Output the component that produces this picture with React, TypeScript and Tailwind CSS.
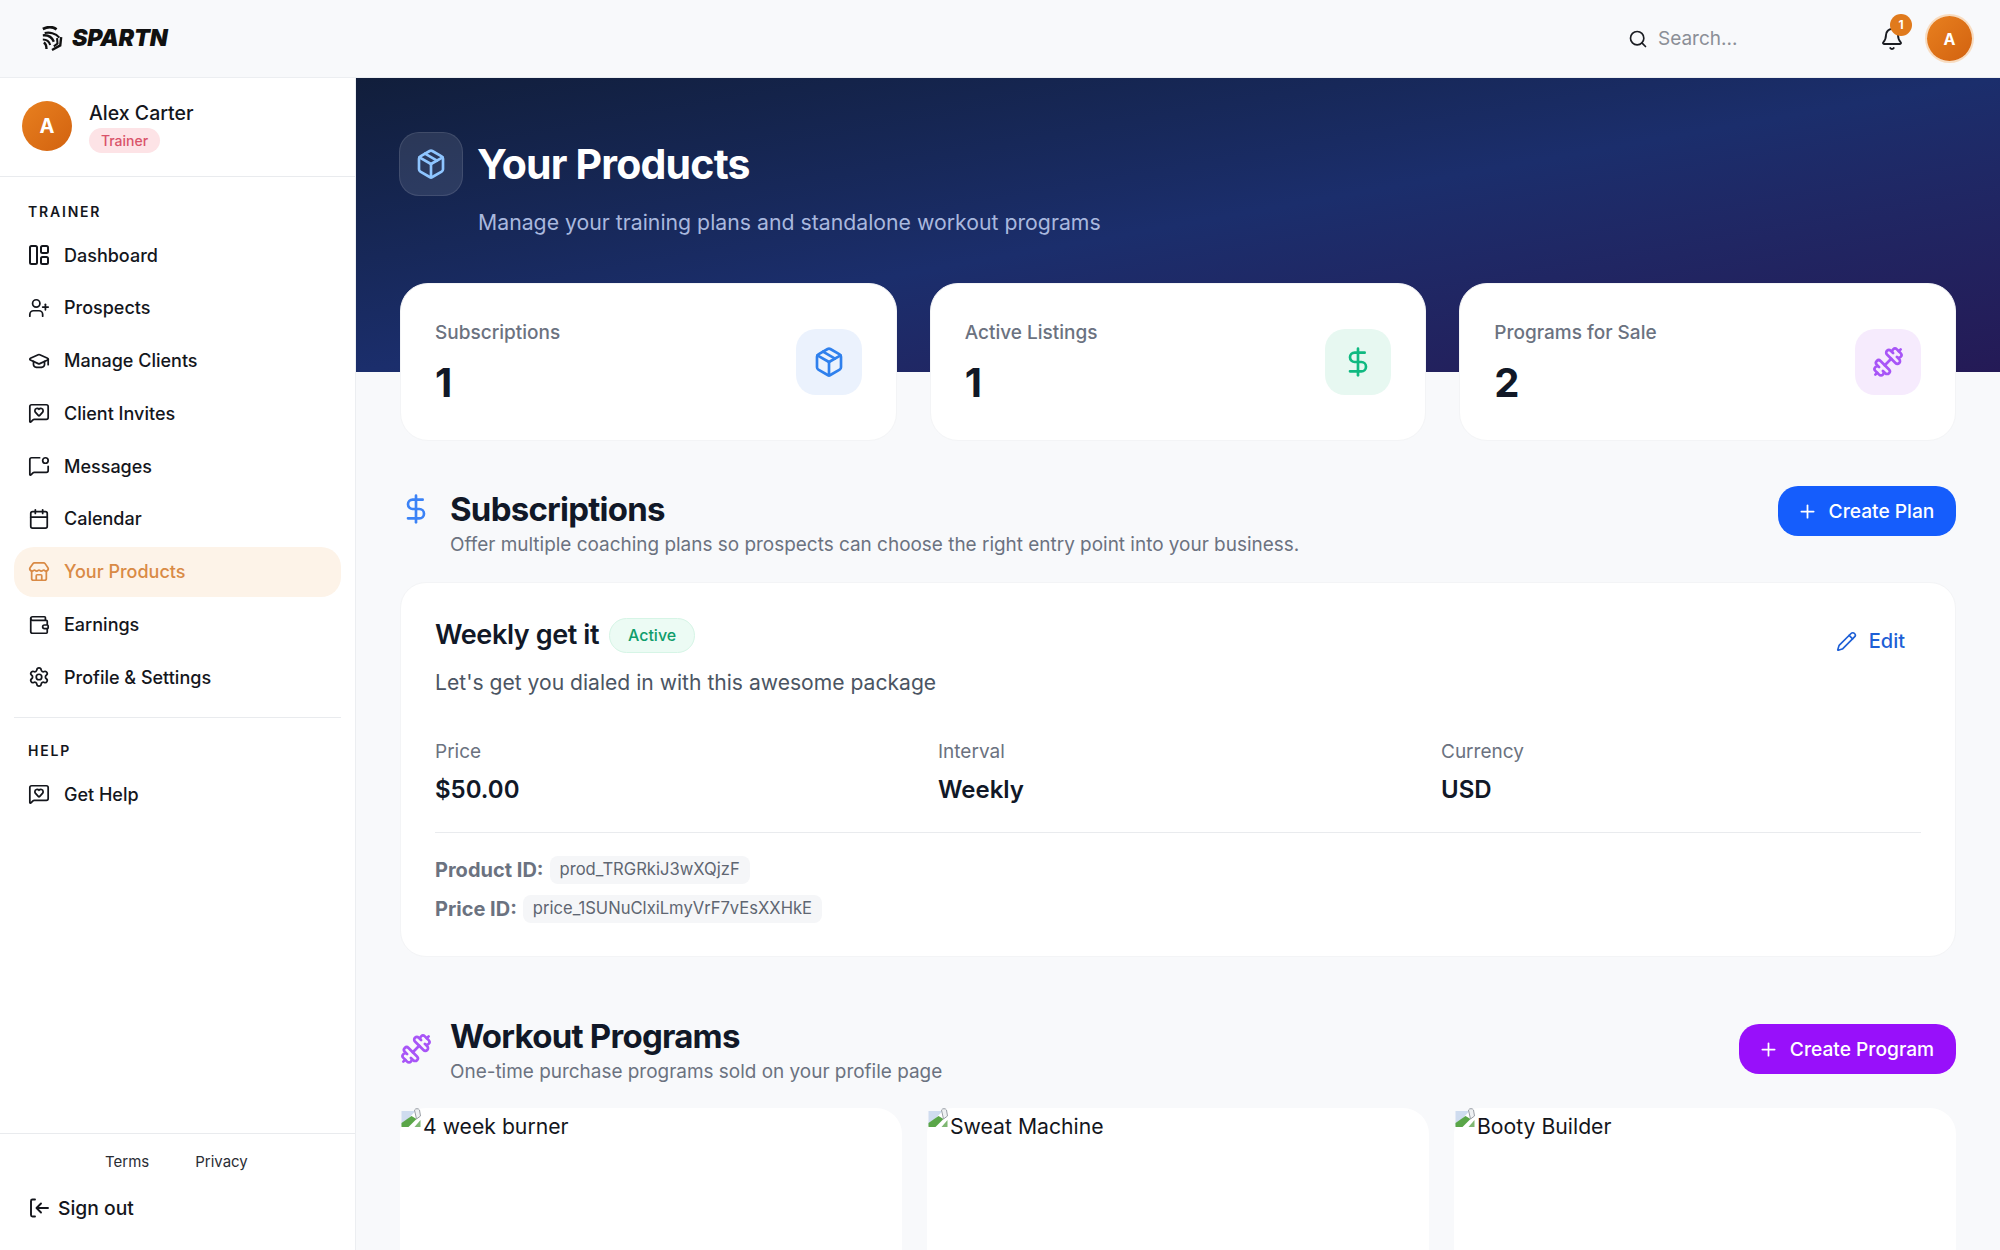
import React from "react";
import {
  Package, DollarSign, Dumbbell, Plus, Search, Bell, Pencil, UserPlus, GraduationCap, MessageSquareHeart,
  MessageSquareDot, Calendar, Store, Wallet, Settings,
} from "lucide-react";

const DashIcon = ({ className = "" }: { className?: string }) => (
  <svg viewBox="0 0 22 22" className={className} fill="none" stroke="currentColor" strokeWidth="2" strokeLinejoin="round">
    <rect x="2" y="2" width="7" height="18" rx="1.5" />
    <rect x="13" y="2" width="7" height="7" rx="1.5" />
    <rect x="13" y="13" width="7" height="7" rx="1.5" />
  </svg>
);

const SignOutIcon = () => (
  <svg viewBox="0 0 22 22" className="w-[22px] h-[22px]" fill="none" stroke="currentColor" strokeWidth="1.9" strokeLinecap="round" strokeLinejoin="round">
    <path d="M7 2.5H4.5a1.5 1.5 0 0 0-1.5 1.5v14a1.5 1.5 0 0 0 1.5 1.5H7" />
    <path d="M20 11H9M13 6.5 8.5 11l4.5 4.5" />
  </svg>
);

const Helmet = () => (
  <svg viewBox="0 0 24 28" className="w-[22px] h-[26px]" fill="none" stroke="#111" strokeWidth="2.2">
    <path d="M2 3c5-2.4 11-2.4 15 .4" strokeWidth="3" />
    <path d="M4 7.500c5-1.200 12 0 16 5" />
    <path d="M2 10c6-.6 10 2 12 7" strokeWidth="2.6" />
    <path d="M2 14.500c4 0 7 2 8 6" />
    <path d="M3 18c2 1 3 3 3 7" strokeWidth="2.6" />
    <path d="M22 12l-1 9-9 5" strokeWidth="2.6" />
    <path d="M17.500 13l.5 6-4 3" />
  </svg>
);

const BrokenImage = () => (
  <svg viewBox="0 0 20 22" className="w-[23px] h-[22px] shrink-0 -mt-[6px]">
    <path d="M0 20 L14 5 L0 5 Z" fill="#cfdcef" />
    <path d="M0 21 L0 17 L10 10 L15 13 L7 21 Z" fill="#5aa648" />
    <path d="M13 21 L19 14 L19 21 Z" fill="#7fb772" />
    <path d="M13 4 a3 3 0 0 1 5 0 L19 10 L15 13 Z" fill="#eef0f2" stroke="#9a9fa6" strokeWidth="1" />
  </svg>
);

const Nav = ({ icon: Icon, label, active = false }: { icon: any; label: string; active?: boolean }) => (
  <div className={`h-[50px] mb-[2.8px] rounded-[20px] flex items-center pl-[14px] gap-[14px] text-[18px] font-medium ${active ? "bg-[#fdf3e8] text-[#d98a45]" : "text-[#14161c]"}`}>
    <Icon className="w-[22px] h-[22px]" strokeWidth={1.9} />
    <span>{label}</span>
  </div>
);

const Stat = ({ label, value, icon: Icon, box, color }: { label: string; value: string; icon: any; box: string; color: string }) => (
  <div className="h-[158px] rounded-[28px] bg-white border border-[#f3f4f6] pl-[34px] pr-[34px] flex items-center justify-between">
    <div className="self-start pt-[36px]">
      <div className="text-[19px] leading-[26px] text-[#6b7280] font-medium">{label}</div>
      <div className="text-[40px] leading-[48px] mt-[13px] font-bold text-[#111827]">{value}</div>
    </div>
    <div className={`w-[66px] h-[66px] rounded-[20px] flex items-center justify-center ${box}`}>
      <Icon className={`w-[32px] h-[32px] ${color}`} strokeWidth={2} />
    </div>
  </div>
);

const SectionHead = ({ icon: Icon, iconColor, iconTop, btnTop, title, sub, button, btnColor, btnW }: { icon: any; iconColor: string; iconTop: string; btnTop: string; title: string; sub: string; button: string; btnColor: string; btnW: string }) => (
  <div className="flex items-start justify-between">
    <div className="flex items-start">
      <div className={`w-[50px] shrink-0 ${iconTop}`}>
        <Icon className={`w-[32px] h-[32px] ${iconColor}`} strokeWidth={2} />
      </div>
      <div>
        <div className="text-[33px] leading-[46px] font-bold tracking-[-0.75px] text-[#111827]">{title}</div>
        <div className="text-[18.95px] leading-[24px] mt-[1px] text-[#6b7280]">{sub}</div>
      </div>
    </div>
    <div className={`h-[50px] rounded-[20px] flex items-center justify-center gap-[11px] pr-[3px] text-white text-[19.2px] font-medium ${btnColor} ${btnW} ${btnTop}`}>
      <Plus className="w-[21px] h-[21px]" strokeWidth={2} />
      {button}
    </div>
  </div>
);

const Field = ({ label, value }: { label: string; value: string }) => (
  <div>
    <div className="text-[19px] leading-[26px] text-[#6b7280]">{label}</div>
    <div className="text-[24px] leading-[34px] mt-[8px] font-semibold text-[#111827]">{value}</div>
  </div>
);

const IdRow = ({ label, value }: { label: string; value: string }) => (
  <div className="flex items-center gap-[6px] h-[29px]">
    <span className="text-[20px] font-bold text-[#6b7280]">{label}</span>
    <span className="bg-[#f5f6f8] rounded-[8px] h-[28px] px-[10px] flex items-center text-[16.6px] text-[#5f6672]">{value}</span>
  </div>
);

const ProgramCard = ({ alt }: { alt: string }) => (
  <div className="h-[300px] rounded-[26px] bg-white flex items-start pt-[4px] text-[21.2px] leading-[28px] text-[#14161c]">
    <BrokenImage />
    <span>{alt}</span>
  </div>
);

export default function App() {
  return (
    <div className="h-screen overflow-hidden flex flex-col bg-[#f8f9fb] font-['Inter',sans-serif]">
      <header className="h-[78px] shrink-0 flex items-center border-b border-[#eceef1] bg-[#f8f9fb]">
        <div className="pl-[41px] flex items-center gap-[9px]">
          <Helmet />
          <span className="text-[23.3px] font-black italic tracking-[-0.2px] text-[#111]">SPARTN</span>
        </div>
        <div className="ml-auto flex items-center">
          <Search className="w-[20px] h-[20px] text-[#1a1c22]" strokeWidth={2} />
          <span className="ml-[10px] pt-[2px] text-[19px] text-[#8b8f97] w-[222px]">Search...</span>
          <div className="relative w-[24px] h-[24px] text-[#1a1c22]">
            <Bell className="w-[24px] h-[24px]" strokeWidth={1.9} />
            <span className="absolute -top-[13px] left-[10px] w-[22px] h-[22px] rounded-full bg-[#e07a1c] text-white text-[12px] font-bold flex items-center justify-center">1</span>
          </div>
          <div className="ml-[23px] mr-[28px] w-[45px] h-[45px] rounded-full bg-gradient-to-br from-[#e8801f] to-[#d2620f] ring-2 ring-[#f8dcc0] text-white text-[16px] font-bold flex items-center justify-center">A</div>
        </div>
      </header>
      <div className="flex-1 flex min-h-0">
        <aside className="w-[356px] shrink-0 bg-white border-r border-[#eceef1] flex flex-col">
          <div className="h-[99px] shrink-0 border-b border-[#e9ebee] flex items-center pl-[22px] gap-[17px] pb-[2px]">
            <div className="w-[50px] h-[50px] rounded-full bg-gradient-to-br from-[#e8801f] to-[#d2620f] text-white text-[20px] font-bold flex items-center justify-center">A</div>
            <div>
              <div className="text-[19.5px] leading-[26px] font-medium text-[#14161c]">Alex Carter</div>
              <div className="mt-[2px] w-[71px] h-[25px] rounded-full bg-[#fde3e6] text-[#d9536a] text-[14px] font-medium flex items-center justify-center">Trainer</div>
            </div>
          </div>
          <div className="px-[14px] pt-[25px]">
            <div className="pl-[14px] text-[14px] leading-[20px] font-semibold tracking-[1.8px] text-[#14161c] mb-[8px]">TRAINER</div>
            <Nav icon={DashIcon} label="Dashboard" />
            <Nav icon={UserPlus} label="Prospects" />
            <Nav icon={GraduationCap} label="Manage Clients" />
            <Nav icon={MessageSquareHeart} label="Client Invites" />
            <Nav icon={MessageSquareDot} label="Messages" />
            <Nav icon={Calendar} label="Calendar" />
            <Nav icon={Store} label="Your Products" active />
            <Nav icon={Wallet} label="Earnings" />
            <Nav icon={Settings} label="Profile & Settings" />
            <div className="h-px bg-[#e9ebee] mt-[15px]" />
            <div className="pl-[14px] text-[14px] leading-[20px] font-semibold tracking-[1.8px] text-[#14161c] mt-[23px] mb-[8px]">HELP</div>
            <Nav icon={MessageSquareHeart} label="Get Help" />
          </div>
          <div className="mt-auto border-t border-[#e9ebee] h-[117px] shrink-0 flex flex-col">
            <div className="pt-[18px] pl-[105px] flex gap-[46px] text-[15px] leading-[20px] text-[#2a2d34]">
              <span>Terms</span>
              <span>Privacy</span>
            </div>
            <div className="mt-[22px] pl-[28px] flex items-center gap-[8px] text-[19.3px] leading-[28px] font-medium text-[#14161c]">
              <SignOutIcon />
              Sign out
            </div>
          </div>
        </aside>
        <main className="flex-1 min-w-0 overflow-hidden">
          <div className="h-[294px] bg-gradient-to-br from-[#111e3b] via-[#1b2e6c] to-[#241a56] pl-[43px] pt-[54px]">
            <div className="flex items-center gap-[14px]">
              <div className="w-[64px] h-[64px] rounded-[20px] bg-white/10 border border-white/10 flex items-center justify-center">
                <Package className="w-[32px] h-[32px] text-[#8ec5ff]" strokeWidth={2} />
              </div>
              <div className="text-[41px] leading-[54px] font-bold tracking-[-0.8px] text-white">Your Products</div>
            </div>
            <div className="pl-[79px] mt-[12px] text-[21.25px] leading-[28px] text-[#a9b8de]">Manage your training plans and standalone workout programs</div>
          </div>
          <div className="px-[44px] -mt-[89px]">
            <div className="grid grid-cols-3 gap-[33px]">
              <Stat label="Subscriptions" value="1" icon={Package} box="bg-[#ebf2fd]" color="text-[#2f80ed]" />
              <Stat label="Active Listings" value="1" icon={DollarSign} box="bg-[#e7f8f1]" color="text-[#10b981]" />
              <Stat label="Programs for Sale" value="2" icon={Dumbbell} box="bg-[#f6ebfd]" color="text-[#a855f7]" />
            </div>
            <div className="mt-[45px]">
              <SectionHead icon={DollarSign} iconColor="text-[#3b82f6]" iconTop="pt-[7px]" btnTop="mt-0" title="Subscriptions" sub="Offer multiple coaching plans so prospects can choose the right entry point into your business." button="Create Plan" btnColor="bg-[#155dfc]" btnW="w-[178px]" />
            </div>
            <div className="mt-[25px] h-[375px] rounded-[26px] bg-white border border-[#f3f4f6] px-[34px] pt-[34px]">
              <div className="flex items-start justify-between">
                <div className="flex items-center gap-[10px]">
                  <span className="text-[27px] leading-[36px] font-semibold tracking-[-0.4px] text-[#111827]">Weekly get it</span>
                  <span className="w-[86px] h-[35px] rounded-full bg-[#ecfbf4] border border-[#d6f5e6] text-[#0f9d6b] text-[16px] font-medium flex items-center justify-center">Active</span>
                </div>
                <div className="flex items-center gap-[12px] text-[#1d5fd6] text-[20px] font-medium pr-[16px] pt-[9px]">
                  <Pencil className="w-[21px] h-[21px]" strokeWidth={1.9} />
                  Edit
                </div>
              </div>
              <div className="mt-[12px] text-[21.1px] leading-[30px] text-[#4b5563]">Let's get you dialed in with this awesome package</div>
              <div className="mt-[41px] grid grid-cols-[503px_503px_1fr] pb-[25px] border-b border-[#e9ebee]">
                <Field label="Price" value="$50.00" />
                <Field label="Interval" value="Weekly" />
                <Field label="Currency" value="USD" />
              </div>
              <div className="mt-[22px] flex flex-col gap-[10px]">
                <IdRow label="Product ID:" value="prod_TRGRkiJ3wXQjzF" />
                <IdRow label="Price ID:" value="price_1SUNuClxiLmyVrF7vEsXXHkE" />
              </div>
            </div>
            <div className="mt-[56px]">
              <SectionHead icon={Dumbbell} iconColor="text-[#a855f7]" iconTop="pt-[20px]" btnTop="mt-[11px]" title="Workout Programs" sub="One-time purchase programs sold on your profile page" button="Create Program" btnColor="bg-[#9810fa]" btnW="w-[217px]" />
            </div>
            <div className="mt-[24px] grid grid-cols-3 gap-[25px]">
              <ProgramCard alt="4 week burner" />
              <ProgramCard alt="Sweat Machine" />
              <ProgramCard alt="Booty Builder" />
            </div>
          </div>
        </main>
      </div>
    </div>
  );
}
